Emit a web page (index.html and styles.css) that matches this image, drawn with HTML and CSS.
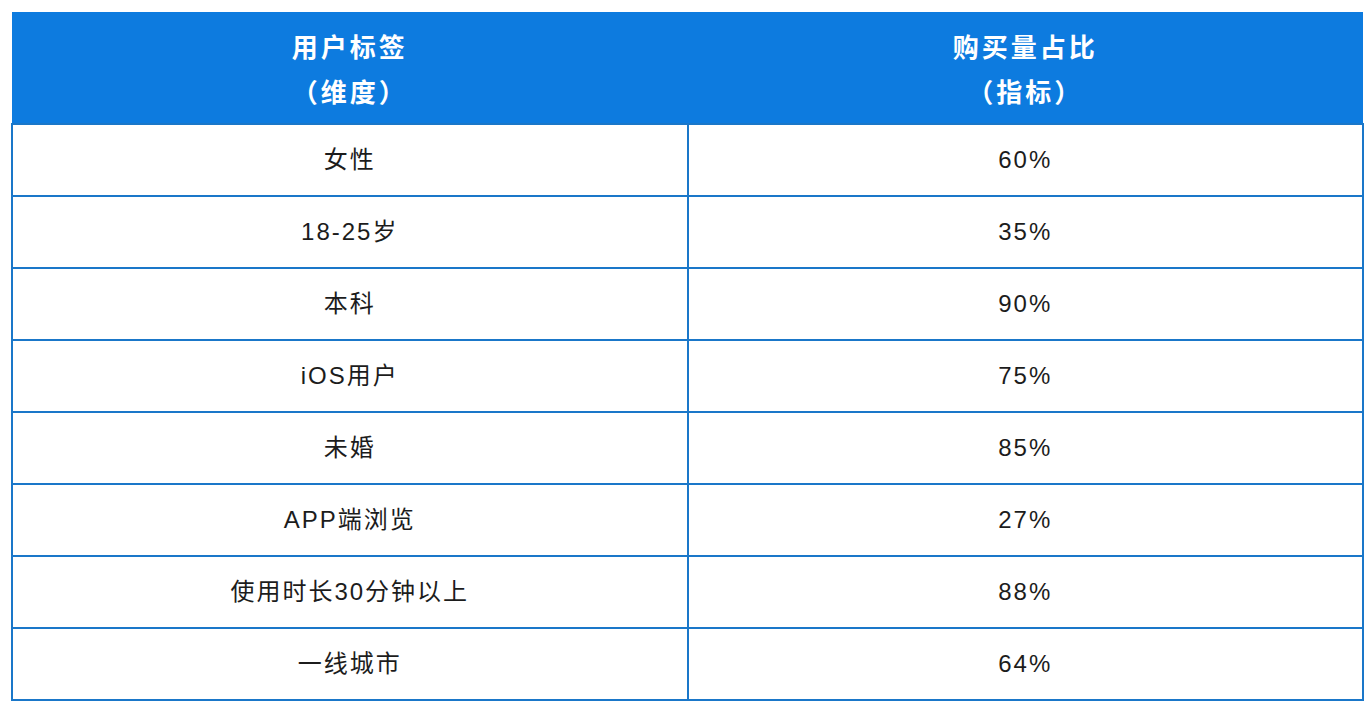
FILE: index.html
```html
<!DOCTYPE html>
<html lang="zh-CN">
<head>
<meta charset="utf-8">
<link rel="stylesheet" href="styles.css">
</head>
<body>
<table class="data">
  <thead>
    <tr>
      <th>用户标签<br>（维度）</th>
      <th>购买量占比<br>（指标）</th>
    </tr>
  </thead>
  <tbody>
    <tr><td>女性</td><td>60%</td></tr>
    <tr><td>18-25岁</td><td>35%</td></tr>
    <tr><td>本科</td><td>90%</td></tr>
    <tr><td>iOS用户</td><td>75%</td></tr>
    <tr><td>未婚</td><td>85%</td></tr>
    <tr><td>APP端浏览</td><td>27%</td></tr>
    <tr><td>使用时长30分钟以上</td><td>88%</td></tr>
    <tr><td>一线城市</td><td>64%</td></tr>
  </tbody>
</table>
</body>
</html>
```
FILE: styles.css
```css
html, body {
  margin: 0;
  padding: 0;
  background: #ffffff;
}
body {
  padding: 12px 4px 0 11px;
  font-family: "Liberation Sans", "Noto Sans CJK SC", sans-serif;
}
.data {
  width: 1353px;
  border-collapse: collapse;
  table-layout: fixed;
}
.data th {
  background: #0d7bdf;
  color: #ffffff;
  font-weight: bold;
  font-size: 26px;
  line-height: 45px;
  letter-spacing: 3px;
  height: 111px;
  padding: 0;
  text-align: center;
  vertical-align: middle;
  border: none;
  font-family: "Noto Sans CJK SC", sans-serif;
}
.data td {
  height: 70px;
  padding: 0;
  text-align: center;
  vertical-align: middle;
  border: 2px solid #1a77c9;
  color: #1c1c1c;
  font-size: 24px;
  line-height: 30px;
  letter-spacing: 2px;
}
```
